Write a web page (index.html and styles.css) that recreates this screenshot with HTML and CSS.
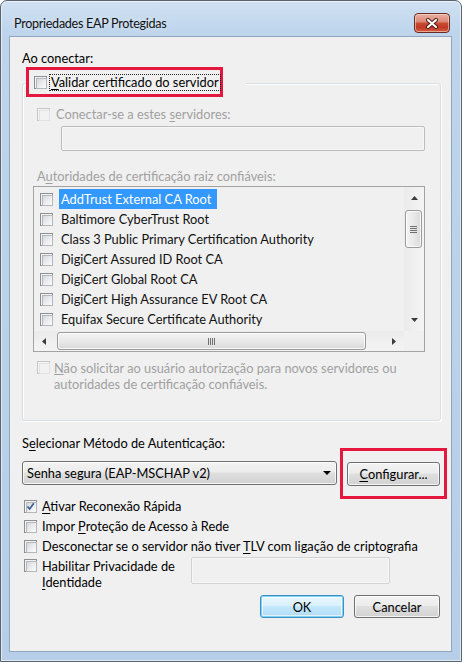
FILE: index.html
```html
<!DOCTYPE html>
<html lang="pt-BR">
<head>
<meta charset="utf-8">
<title>Propriedades EAP Protegidas</title>
<link rel="stylesheet" href="styles.css">
</head>
<body>
<div class="window">
  <div class="titlebar">
    <span class="title">Propriedades EAP Protegidas</span>
    <span class="close">
      <svg width="14" height="11" viewBox="0 0 14 11"><path d="M3 2 L11 9 M11 2 L3 9" stroke="#4a1610" stroke-width="4" stroke-linecap="round"/><path d="M3 2 L11 9 M11 2 L3 9" stroke="#fff" stroke-width="2.2" stroke-linecap="round"/></svg>
    </span>
  </div>
  <div class="client">
    <div class="label">Ao conectar:</div>
    <div class="legend">
      <div class="mark mark-legend">
        <span class="cb"></span>
        <span class="focus"><u>V</u>alidar certificado do servidor</span>
      </div>
    </div>
    <div class="group">
      <div class="row dis"><span class="cb cb-dis"></span><span>Conectar-se a estes <u>s</u>ervidores:</span></div>
      <div class="input input-servers"></div>
      <div class="label label-aut dis">A<u>u</u>toridades de certificação raiz confiáveis:</div>
      <div class="list">
        <div class="list-main">
          <div class="items">
            <div class="item"><span class="cb"></span><span class="item-text sel">AddTrust External CA Root</span></div>
            <div class="item"><span class="cb"></span><span class="item-text">Baltimore CyberTrust Root</span></div>
            <div class="item"><span class="cb"></span><span class="item-text">Class 3 Public Primary Certification Authority</span></div>
            <div class="item"><span class="cb"></span><span class="item-text">DigiCert Assured ID Root CA</span></div>
            <div class="item"><span class="cb"></span><span class="item-text">DigiCert Global Root CA</span></div>
            <div class="item"><span class="cb"></span><span class="item-text">DigiCert High Assurance EV Root CA</span></div>
            <div class="item"><span class="cb"></span><span class="item-text">Equifax Secure Certificate Authority</span></div>
          </div>
          <div class="vscroll">
            <span class="sbtn"><svg width="7" height="4" viewBox="0 0 7 4"><path d="M0 4 L3.5 0 L7 4 Z" fill="#3b3b3b"/></svg></span>
            <span class="vthumb"><span class="vgrip"></span></span>
            <span class="sbtn sbtn-end"><svg width="7" height="4" viewBox="0 0 7 4"><path d="M0 0 L7 0 L3.5 4 Z" fill="#3b3b3b"/></svg></span>
          </div>
        </div>
        <div class="hbar">
          <div class="hscroll">
            <span class="sbtn sbtn-h"><svg width="4" height="7" viewBox="0 0 4 7"><path d="M4 0 L4 7 L0 3.5 Z" fill="#3b3b3b"/></svg></span>
            <span class="hthumb"><span class="hgrip"></span></span>
            <span class="sbtn sbtn-h sbtn-right"><svg width="4" height="7" viewBox="0 0 4 7"><path d="M0 0 L4 3.5 L0 7 Z" fill="#3b3b3b"/></svg></span>
          </div>
          <div class="corner"></div>
        </div>
      </div>
      <div class="row-multi dis"><span class="cb cb-dis"></span><span class="multi-text">Não solicitar ao usuário autorização para novos servidores ou autoridades de certificação confiáveis.</span></div>
    </div>

    <div class="label label-method">S<u>e</u>lecionar Método de Autenticação:</div>
    <div class="method-row">
      <div class="select">
        <span>Senha segura (EAP-MSCHAP v2)</span>
        <svg class="select-arrow" width="8" height="4" viewBox="0 0 8 4"><path d="M0 0 L8 0 L4 4 Z" fill="#000"/></svg>
      </div>
      <div class="mark mark-btn">
        <span class="btn btn-config"><u>C</u>onfigurar...</span>
      </div>
    </div>

    <div class="cbrow cbrow-first"><span class="cb cb-checked"><svg width="9" height="9" viewBox="0 0 9 9"><path d="M1.5 4.5 L3.6 7 L7.8 1.3" stroke="#3d5f96" stroke-width="1.7" fill="none"/></svg></span><span><u>A</u>tivar Reconexão Rápida</span></div>
    <div class="cbrow"><span class="cb"></span><span>Impor <u>P</u>roteção de Acesso à Rede</span></div>
    <div class="cbrow"><span class="cb"></span><span>Desconectar se o servidor não tiver <u>T</u>LV com ligação de criptografia</span></div>
    <div class="identity-row">
      <span class="cb cb-top"></span>
      <span class="identity-text">Habilitar Privacidade de <u>I</u>dentidade</span>
      <div class="input input-identity"></div>
    </div>
    <div class="buttons">
      <span class="btn btn-default">OK</span>
      <span class="btn btn-cancel">Cancelar</span>
    </div>
  </div>
</div>
</body>
</html>
```
FILE: styles.css
```css
* { box-sizing: border-box; }
html, body { margin: 0; padding: 0; }
body {
  width: 462px;
  height: 662px;
  overflow: hidden;
  background: #ffffff;
  font-family: Lato, "Segoe UI", "Noto Sans", sans-serif;
  font-size: 12.8px;
  color: #000;
}
u { text-decoration: underline; text-underline-offset: 2px; }

.window {
  width: 462px;
  height: 662px;
  border: 1px solid #59636e;
  border-radius: 7px 7px 0 0;
  background: linear-gradient(180deg, #d0e1f2 0%, #bdd4ec 34px, #b7cee8 100%);
  box-shadow: inset 0 0 0 1px rgba(255,255,255,0.55);
  display: flex;
  flex-direction: column;
}

.titlebar {
  height: 35px;
  flex: none;
  display: flex;
  align-items: center;
  justify-content: space-between;
  padding: 9px 11px 0 13px;
}
.title {
  font-size: 12.6px;
  letter-spacing: -0.3px;
  color: #111;
  text-shadow: 0 0 6px rgba(255,255,255,0.6);
}
.close {
  width: 36px;
  height: 20px;
  border: 1px solid #6b2b25;
  border-radius: 4px;
  background: linear-gradient(180deg, #eab0a3 0%, #dc8a78 42%, #c94a35 52%, #c23a26 75%, #d4603f 100%);
  box-shadow: inset 0 0 0 1px rgba(255,225,215,0.55);
  display: flex;
  align-items: center;
  justify-content: center;
}

.client {
  flex: 1;
  margin: 0 9px 9px 8px;
  background: #f0f0f0;
  border: 1px solid #8fa7c0;
  padding: 13px 11px 0 12px;
  display: flex;
  flex-direction: column;
}

.label { line-height: 16px; height: 16px; white-space: nowrap; }
.dis { color: #a0a0a0; }

/* checkboxes */
.cb {
  flex: none;
  width: 13px;
  height: 13px;
  border: 1px solid #8e8f8f;
  background: #f4f4f4;
  padding: 1px;
  display: inline-block;
  position: relative;
}
.cb::before {
  content: "";
  display: block;
  width: 9px;
  height: 9px;
  border: 1px solid #b3b7bc;
  background: linear-gradient(135deg, #d6d9dd 0%, #eceef0 55%, #fbfbfb 100%);
}
.cb-dis { border-color: #c6c6c6; }
.cb-dis::before { border-color: #e2e2e2; background: #f2f2f2; }
.cb-checked svg { position: absolute; left: 1px; top: 1px; }

/* legend with annotation mark */
.legend {
  margin: 1px 0 -14px 4px;
  width: 220px;
  height: 30px;
  background: #f0f0f0;
  position: relative;
  z-index: 1;
}
.mark { border: 3px solid #e5173f; }
.mark-legend {
  width: 197px;
  height: 30px;
  display: flex;
  align-items: center;
  padding-left: 5px;
  gap: 2px;
}
.focus {
  border: 1px dotted #222;
  padding: 0 1px;
  line-height: 15px;
  white-space: nowrap;
}

/* group */
.group {
  width: 419px;
  border: 1px solid #d5dfe5;
  border-radius: 3px;
  box-shadow: inset 1px 1px 0 #fff, 1px 1px 0 #fff;
  padding: 22px 0 28px 14px;
}
.row {
  display: flex;
  align-items: center;
  height: 16px;
  gap: 6px;
  white-space: nowrap;
}
.input {
  background: #f0f0f0;
  border: 1px solid #bdbdbd;
  border-radius: 2px;
  box-shadow: inset 0 0 0 1px #f7f7f7;
}
.input-servers {
  margin: 4px 0 0 24px;
  width: 364px;
  height: 25px;
}
.label-aut { margin-top: 17px; }

/* list */
.list {
  margin: 2px 0 0 -4px;
  width: 392px;
  height: 166px;
  border: 1px solid #a3a3a3;
  background: #f0f0f0;
  display: flex;
  flex-direction: column;
}
.list-main { flex: 1; display: flex; min-height: 0; }
.items { flex: 1; padding-top: 2px; overflow: hidden; }
.item {
  height: 20px;
  display: flex;
  align-items: center;
  padding-left: 6px;
  white-space: nowrap;
  color: #111;
}
.item .cb { margin-right: 6px; }
.item-text { height: 20px; line-height: 20px; padding: 0 2px; }
.sel { background: #3399ff; color: #fff; padding-right: 6px; }

.vscroll {
  width: 20px;
  flex: none;
  display: flex;
  flex-direction: column;
  background: linear-gradient(90deg, #ebebeb, #f4f4f4);
}
.sbtn {
  height: 22px;
  flex: none;
  display: flex;
  align-items: center;
  justify-content: center;
}
.sbtn-end { margin-top: auto; }
.vthumb {
  margin: 1px 2px 0 1px;
  height: 38px;
  border: 1px solid #9a9a9a;
  border-radius: 3px;
  background: linear-gradient(90deg, #f4f4f4 0%, #e9e9e9 50%, #d9d9d9 100%);
  box-shadow: inset 0 0 0 1px rgba(255,255,255,0.8);
  display: flex;
  align-items: center;
  justify-content: center;
}
.vgrip {
  width: 7px;
  height: 7px;
  background: repeating-linear-gradient(180deg, #6f6f6f 0 1px, transparent 1px 2px);
}

.hbar { height: 20px; flex: none; display: flex; }
.hscroll {
  flex: 1;
  display: flex;
  align-items: center;
  background: linear-gradient(180deg, #ebebeb, #f4f4f4);
}
.sbtn-h { width: 20px; height: 20px; }
.sbtn-right { margin-left: auto; }
.hthumb {
  margin-left: 3px;
  width: 309px;
  height: 18px;
  border: 1px solid #9a9a9a;
  border-radius: 3px;
  background: linear-gradient(180deg, #f4f4f4 0%, #e9e9e9 50%, #d9d9d9 100%);
  box-shadow: inset 0 0 0 1px rgba(255,255,255,0.8);
  display: flex;
  align-items: center;
  justify-content: center;
}
.hgrip {
  width: 7px;
  height: 7px;
  background: repeating-linear-gradient(90deg, #6f6f6f 0 1px, transparent 1px 2px);
}
.corner { width: 20px; flex: none; background: #f0f0f0; }

.row-multi {
  margin-top: 8px;
  display: flex;
  align-items: flex-start;
  gap: 4px;
}
.row-multi .cb { margin-top: 1px; }
.multi-text {
  line-height: 16px;
  width: 355px;
  text-decoration: none;
}
.multi-text::first-letter { text-decoration: underline; }

/* method */
.label-method { margin-top: 14px; }
.method-row {
  margin-top: 10px;
  display: flex;
  align-items: flex-start;
}
.select {
  flex: none;
  width: 315px;
  height: 24px;
  border: 1px solid #707070;
  border-radius: 3px;
  background: linear-gradient(180deg, #f3f3f3 0%, #ececec 45%, #dfdfdf 50%, #d2d2d2 100%);
  box-shadow: inset 0 0 0 1px rgba(255,255,255,0.75);
  display: flex;
  align-items: center;
  padding-left: 4px;
  white-space: nowrap;
}
.select-arrow { margin-left: auto; margin-right: 5px; }
.mark-btn {
  flex: none;
  margin: -13px 0 -13px 3px;
  padding: 11px 4px 10px 4px;
}
.btn {
  display: flex;
  align-items: center;
  justify-content: center;
  border: 1px solid #707070;
  border-radius: 3px;
  background: linear-gradient(180deg, #f3f3f3 0%, #ececec 45%, #dfdfdf 50%, #d2d2d2 100%);
  box-shadow: inset 0 0 0 1px rgba(255,255,255,0.75);
  white-space: nowrap;
}
.btn-config { width: 93px; height: 24px; }

/* checkbox rows */
.cbrow {
  height: 20px;
  display: flex;
  align-items: center;
  gap: 5px;
  padding-left: 2px;
  white-space: nowrap;
}
.cbrow-first { margin-top: 10px; }

.identity-row {
  margin-top: 1px;
  display: flex;
  align-items: flex-start;
  padding-left: 2px;
}
.cb-top { margin-top: 2px; }
.identity-text {
  margin: 1px 0 0 5px;
  width: 145px;
  line-height: 16px;
}
.input-identity {
  flex: none;
  margin-left: 4px;
  width: 199px;
  height: 27px;
  border-color: #d2d2d2;
}

.buttons {
  margin-top: 5px;
  display: flex;
  justify-content: flex-end;
  gap: 10px;
}
.btn-default {
  width: 84px;
  height: 23px;
  border-color: #3c90c4;
  background: linear-gradient(180deg, #eaf6fd 0%, #dbf1fc 45%, #c4e8fc 50%, #b1dcf5 100%);
  box-shadow: inset 0 0 0 1px #7fd3f5, inset 0 0 0 2px rgba(255,255,255,0.6);
}
.btn-cancel { width: 86px; height: 23px; }
```
